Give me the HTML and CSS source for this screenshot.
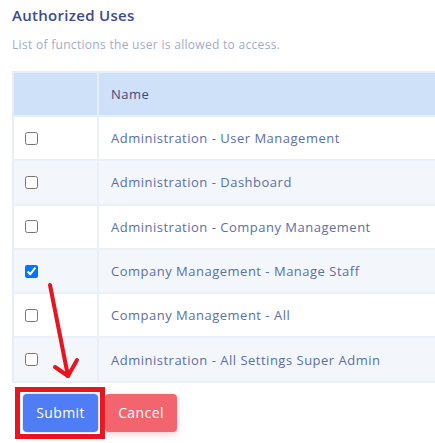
FILE: index.html
```html
<!DOCTYPE html>
<html>
<head>
<meta charset="utf-8">
<link rel="stylesheet" href="styles.css">
</head>
<body>
<div class="panel">
  <h2 class="title">Authorized Uses</h2>
  <p class="subtitle">List of functions the user is allowed to access.</p>
  <table class="uses">
    <thead>
      <tr><th class="col-check"></th><th>Name</th></tr>
    </thead>
    <tbody>
      <tr><td class="col-check"><input type="checkbox"></td><td>Administration - User Management</td></tr>
      <tr class="alt"><td class="col-check"><input type="checkbox"></td><td>Administration - Dashboard</td></tr>
      <tr><td class="col-check"><input type="checkbox"></td><td>Administration - Company Management</td></tr>
      <tr class="alt"><td class="col-check"><input type="checkbox" checked></td><td>Company Management - Manage Staff</td></tr>
      <tr><td class="col-check"><input type="checkbox"></td><td>Company Management - All</td></tr>
      <tr class="alt"><td class="col-check"><input type="checkbox"></td><td>Administration - All Settings Super Admin</td></tr>
    </tbody>
  </table>
  <div class="actions">
    <div class="highlight"><button class="btn btn-submit">Submit</button></div>
    <button class="btn btn-cancel">Cancel</button>
  </div>
</div>
<svg class="arrow" width="435" height="443" viewBox="0 0 435 443">
  <g stroke="#e8141e" stroke-width="4" stroke-linecap="round" fill="none">
    <line x1="50" y1="285" x2="68" y2="376"/>
    <line x1="55" y1="367" x2="68" y2="376"/>
    <line x1="77" y1="360" x2="68" y2="376"/>
  </g>
</svg>
</body>
</html>
```
FILE: styles.css
```css
html, body {
  margin: 0;
  padding: 0;
  background: #ffffff;
}
body {
  font-family: "Open Sans", "Noto Sans", sans-serif;
  position: relative;
  width: 435px;
  height: 443px;
  overflow: hidden;
}
.panel {
  padding: 5px 0 0 12px;
}
.title {
  margin: 0;
  font-size: 15px;
  font-weight: 600;
  color: #3d4b8c;
  line-height: 20px;
  letter-spacing: 0.3px;
}
.subtitle {
  margin: 13px 0 0 0;
  font-size: 12px;
  color: #a3abc9;
  line-height: 14px;
  letter-spacing: 0.3px;
}
.uses {
  margin-top: 19px;
  width: 423px;
  border-collapse: collapse;
  border-top: 2px solid #e8eef7;
  border-left: 2px solid #e8eef7;
}
.uses th,
.uses td {
  height: 42.3px;
  padding: 0 0 0 12px;
  text-align: left;
  font-size: 13px;
  letter-spacing: 0.5px;
  border-bottom: 2px solid #eaf0f8;
  border-left: 2px solid #eaf0f8;
  vertical-align: middle;
}
.uses th {
  height: 42px;
  background: #cfe1f9;
  color: #3e4a7c;
  font-weight: 500;
  border-color: #e6eef9;
}
.uses td {
  color: #5c6ea6;
}
.uses .col-check {
  width: 72px;
  padding-left: 11px;
  border-left: none;
}
.uses tr.alt td {
  background: #f3f7fc;
}
.uses input {
  margin: 0;
  width: 13px;
  height: 13px;
  display: block;
}
.actions {
  display: flex;
  align-items: center;
  gap: 0;
  margin: 4px 0 0 3px;
}
.highlight {
  border: 5px solid #e8141e;
  padding: 2px 2px 2px 3px;
  background: #ffffff;
}
.btn {
  border: none;
  border-radius: 4px;
  font-family: "Open Sans", "Noto Sans", sans-serif;
  font-size: 14px;
  letter-spacing: 0.4px;
  color: #ffffff;
  height: 38px;
  padding: 0;
}
.btn-submit {
  width: 75px;
  background: #4e7df5;
  box-shadow: 0 0 0 1px #dfe6fb;
  display: block;
}
.btn-cancel {
  width: 72px;
  background: #f2646e;
  box-shadow: 0 2px 6px rgba(242, 100, 110, 0.35);
}
.arrow {
  position: absolute;
  left: 0;
  top: 0;
  pointer-events: none;
}
```
